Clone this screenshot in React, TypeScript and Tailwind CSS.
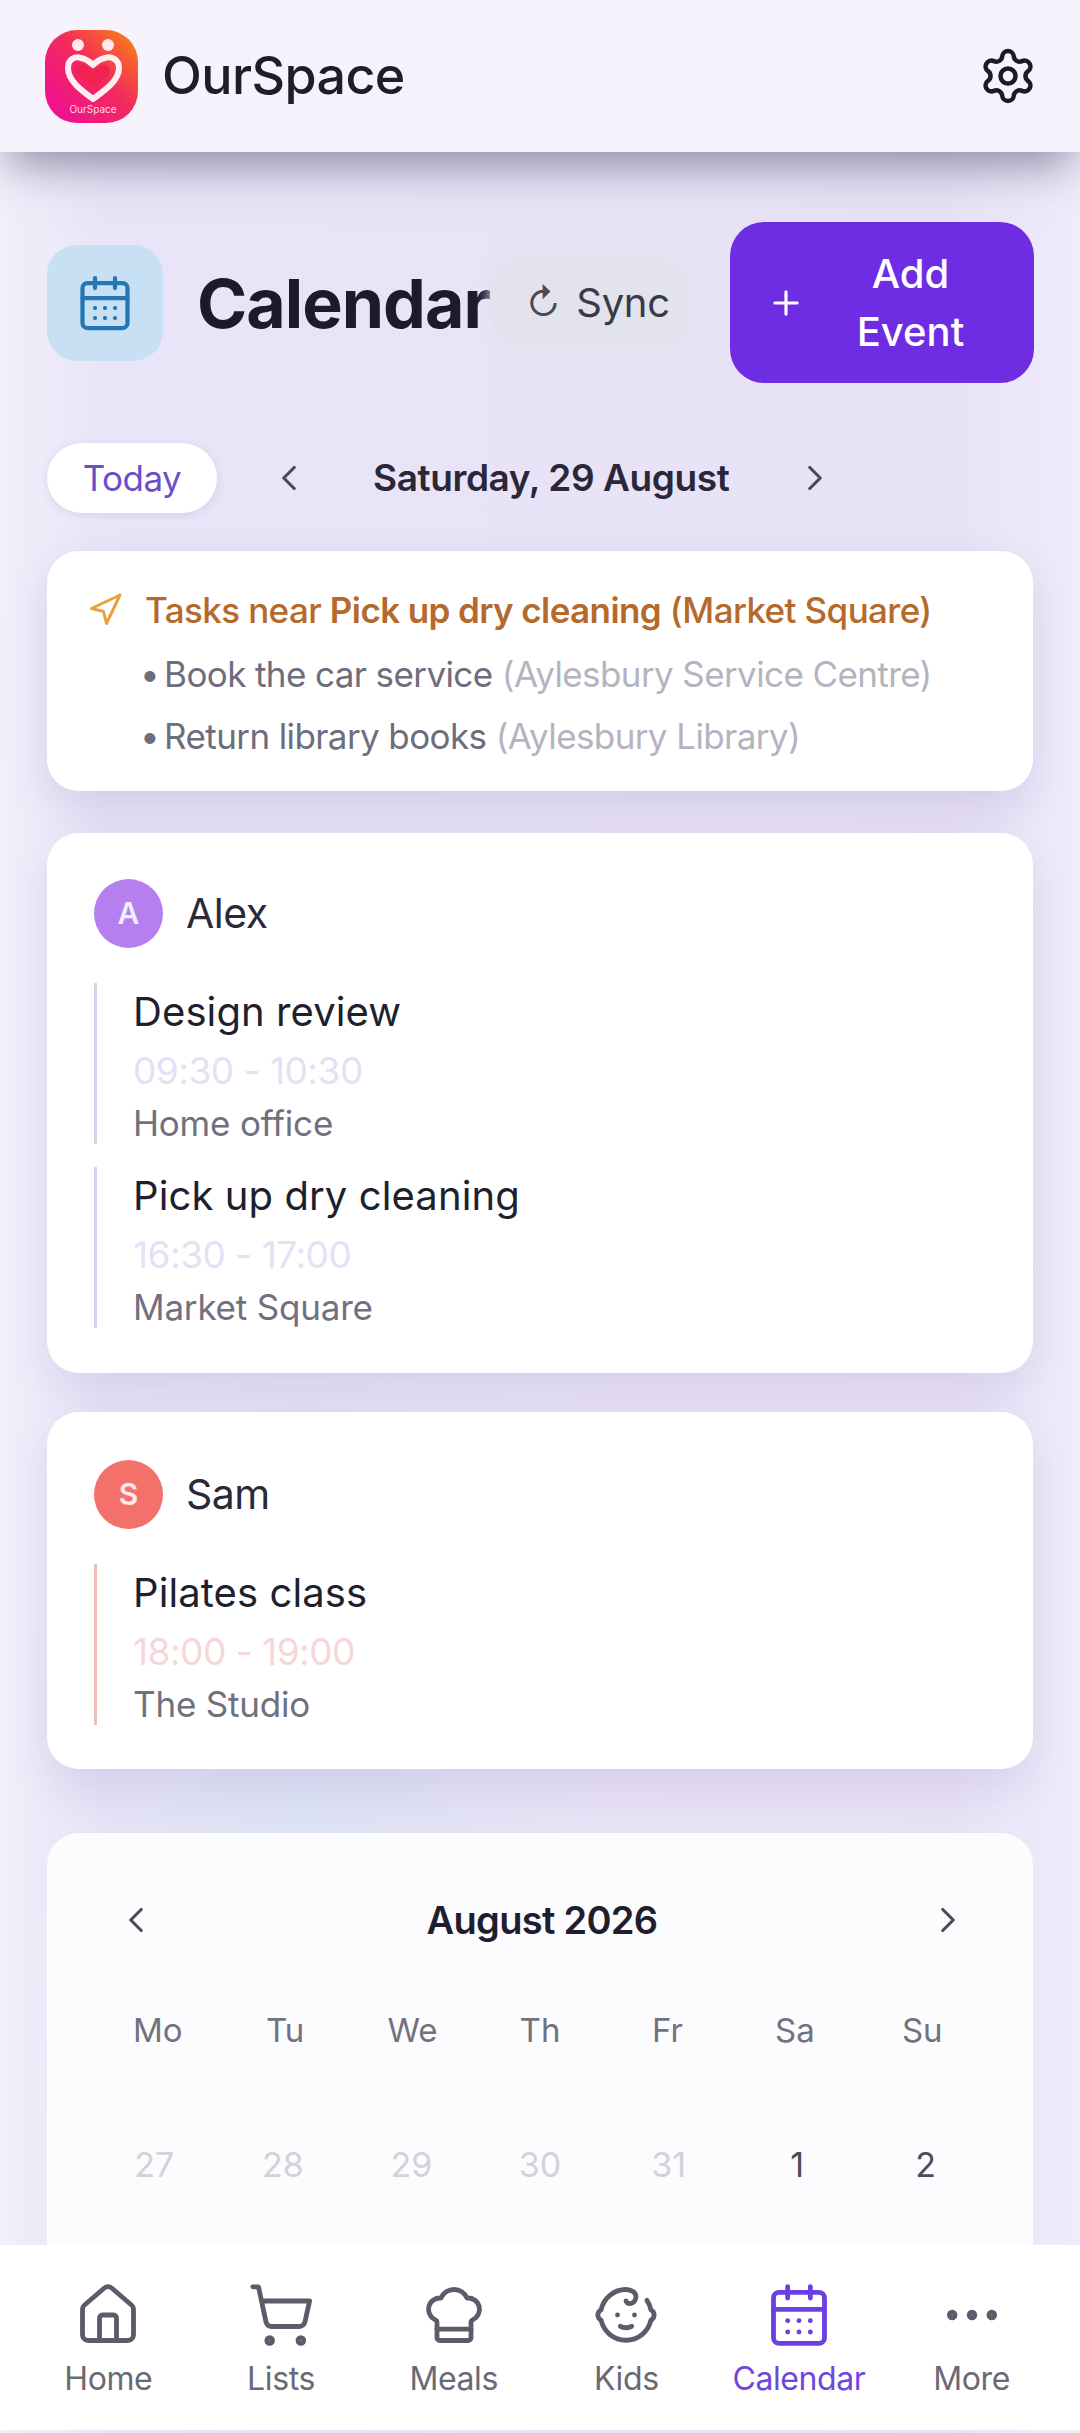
import {
  Baby,
  CalendarDays,
  ChefHat,
  ChevronLeft,
  ChevronRight,
  Ellipsis,
  House,
  Navigation,
  Plus,
  Settings,
  ShoppingCart,
} from "lucide-react";

const font = "font-['Inter','Noto_Sans',sans-serif]";

function Logo() {
  return (
    <svg viewBox="0 0 93 93" className="w-[93px] h-[93px] shrink-0">
      <defs>
        <linearGradient id="logo-grad" x1="0" y1="1" x2="1" y2="0">
          <stop offset="0" stopColor="#ee0a9c" />
          <stop offset="0.55" stopColor="#f32a5c" />
          <stop offset="1" stopColor="#fb8a0c" />
        </linearGradient>
      </defs>
      <rect width="93" height="93" rx="32" fill="url(#logo-grad)" />
      <circle cx="33" cy="15" r="6" fill="#ffe9ee" />
      <circle cx="63" cy="15" r="6" fill="#ffe9ee" />
      <path
        d="M48 69 C37 61 23 51 23 38 C23 29 30 26 36 28 C41 29 45 32 48 35 C51 32 55 29 60 28 C66 26 74 29 74 38 C74 51 59 61 48 69Z"
        fill="none"
        stroke="#ffeef2"
        strokeWidth="6"
        strokeLinejoin="round"
      />
      <path
        d="M48 58 C42 53 32 47 32 40 C32 35 38 34 41 36 L48 41 L55 36 C58 34 65 35 65 40 C65 47 54 53 48 58Z"
        fill="#ee2350"
      />
      <text x="48" y="83" textAnchor="middle" fontSize="10" fill="#ffd9e6" fontFamily="Inter, sans-serif">
        OurSpace
      </text>
    </svg>
  );
}

function EventRow({
  title,
  time,
  place,
  barColor,
  timeColor,
}: {
  title: string;
  time: string;
  place: string;
  barColor: string;
  timeColor: string;
}) {
  return (
    <div className={`border-l-[3px] ${barColor} pl-[36px] h-[161px] flex flex-col`}>
      <div className="text-[40px] leading-[56px] mt-[1px] text-[#201f2e] tracking-[0.1px]">{title}</div>
      <div className={`text-[37px] leading-[48px] mt-[7px] tracking-[-0.5px] ${timeColor}`}>{time}</div>
      <div className="text-[35px] leading-[44px] mt-[6px] text-[#70707e] tracking-[-0.2px]">{place}</div>
    </div>
  );
}

function PersonHeader({ initial, name, color }: { initial: string; name: string; color: string }) {
  return (
    <div className="flex items-center gap-[23px] mb-[35px]">
      <div className={`w-[69px] h-[69px] rounded-full ${color} flex items-center justify-center text-white/85 text-[30px] font-semibold`}>
        {initial}
      </div>
      <div className="text-[41px] text-[#2a2937] tracking-[-0.5px]">{name}</div>
    </div>
  );
}

const weekDays = ["Mo", "Tu", "We", "Th", "Fr", "Sa", "Su"];
const monthDays = [
  { day: 27, muted: true },
  { day: 28, muted: true },
  { day: 29, muted: true },
  { day: 30, muted: true },
  { day: 31, muted: true },
  { day: 1, muted: false },
  { day: 2, muted: false },
  { day: 3, muted: false },
  { day: 4, muted: false },
  { day: 5, muted: false },
  { day: 6, muted: false },
  { day: 7, muted: false },
  { day: 8, muted: false },
  { day: 9, muted: false },
];

const navItems = [
  { label: "Home", icon: House },
  { label: "Lists", icon: ShoppingCart },
  { label: "Meals", icon: ChefHat },
  { label: "Kids", icon: Baby },
  { label: "Calendar", icon: CalendarDays, active: true },
  { label: "More", icon: Ellipsis },
];

export default function App() {
  return (
    <div className={`${font} relative w-[1080px] h-[2433px] overflow-hidden flex flex-col bg-[radial-gradient(ellipse_at_28%_75%,#dde2f4_0%,transparent_26%),linear-gradient(90deg,#f1effb_0%,#e9e4f7_10%,#e8e2f6_88%,#efecfb_100%)]`}>
      {/* Top bar */}
      <header className="relative z-10 h-[152px] shrink-0 flex items-center justify-between pl-[45px] pr-[42px] bg-[#f6f3fd] shadow-[0_20px_42px_-8px_rgba(50,45,80,0.5)]">
        <div className="flex items-center gap-[24px]">
          <Logo />
          <span className="text-[52px] font-medium text-[#1f1d2b] tracking-[-0.6px]">OurSpace</span>
        </div>
        <Settings className="w-[60px] h-[60px] text-[#1c1a28]" strokeWidth={1.8} />
      </header>

      <main className="flex-1 min-h-0 overflow-hidden px-[47px] pt-[70px]">
        {/* Title row */}
        <div className="flex items-center h-[161px]">
          <div className="w-[116px] h-[116px] rounded-[30px] bg-[#c8e0f4] flex items-center justify-center shrink-0">
            <CalendarDays className="w-[60px] h-[60px] text-[#2377b4]" strokeWidth={1.7} />
          </div>
          <h1 className="ml-[34px] text-[68px] font-bold text-[#1d1a2e] tracking-[-1px] w-[293px] whitespace-nowrap">Calendar</h1>
          <button className="w-[200px] h-[90px] rounded-[32px] bg-[#e3e3ee] shadow-[0_0_14px_#e3e3ee] flex items-center justify-center gap-[16px] pl-[16px] text-[#3a3947] text-[40px] tracking-[-0.3px]">
            <span className="text-[36px] leading-none text-[#4a4957]">↻</span>
            Sync
          </button>
          <button className="ml-auto -mr-[1px] w-[304px] h-[161px] rounded-[34px] bg-[#6e2de2] flex items-center pl-[37px] text-white text-[40px] leading-[58px] font-medium">
            <Plus className="w-[38px] h-[38px] shrink-0" strokeWidth={2} />
            <span className="flex-1 text-center pr-[18px]">
              Add
              <br />
              Event
            </span>
          </button>
        </div>

        {/* Date row */}
        <div className="mt-[60px] flex items-center h-[70px]">
          <button className="w-[170px] h-[70px] rounded-full bg-white text-[#6b4fc9] text-[35px] tracking-[-0.5px] shadow-[0_2px_8px_rgba(90,70,160,0.12)]">Today</button>
          <ChevronLeft className="ml-[51px] w-[42px] h-[42px] text-[#4a4957]" strokeWidth={1.8} />
          <div className="ml-[63px] w-[360px] text-[37px] font-semibold text-[#2a2838] tracking-[-0.4px] whitespace-nowrap">Saturday, 29 August</div>
          <ChevronRight className="ml-[61px] w-[42px] h-[42px] text-[#4a4957]" strokeWidth={1.8} />
        </div>

        {/* Nearby tasks */}
        <section className="mt-[38px] h-[240px] rounded-[32px] bg-white pt-[34px] pl-[40px] shadow-[0_18px_44px_rgba(80,65,150,0.14)]">
          <div className="flex items-center gap-[22px] h-[50px]">
            <Navigation className="w-[36px] h-[36px] text-[#e9a23b]" strokeWidth={2} />
            <div className="text-[35px] font-medium text-[#b5692a] tracking-[-0.6px] whitespace-nowrap">
              Tasks near <span className="font-semibold">Pick up dry cleaning</span> (Market Square)
            </div>
          </div>
          <div className="pl-[53px] mt-[8px] text-[35px] leading-[62px] tracking-[-0.6px] whitespace-nowrap text-[#6d6d7c]">
            <div>
              <span className="mr-[5px]">•</span>Book the car service <span className="text-[#b4b4c0]">(Aylesbury Service Centre)</span>
            </div>
            <div>
              <span className="mr-[5px]">•</span>Return library books <span className="text-[#b4b4c0]">(Aylesbury Library)</span>
            </div>
          </div>
        </section>

        {/* Alex */}
        <section className="mt-[42px] h-[540px] rounded-[32px] bg-white pt-[46px] px-[47px] shadow-[0_18px_44px_rgba(80,65,150,0.12)]">
          <PersonHeader initial="A" name="Alex" color="bg-[#b57ff0]" />
          <div className="flex flex-col gap-[23px]">
            <EventRow title="Design review" time="09:30 - 10:30" place="Home office" barColor="border-[#d9cff0]" timeColor="text-[#e6dff5]" />
            <EventRow title="Pick up dry cleaning" time="16:30 - 17:00" place="Market Square" barColor="border-[#d9cff0]" timeColor="text-[#e6dff5]" />
          </div>
        </section>

        {/* Sam */}
        <section className="mt-[39px] h-[357px] rounded-[32px] bg-white pt-[48px] px-[47px] shadow-[0_18px_44px_rgba(80,65,150,0.12)]">
          <PersonHeader initial="S" name="Sam" color="bg-[#f4706a]" />
          <EventRow title="Pilates class" time="18:00 - 19:00" place="The Studio" barColor="border-[#f2bcb8]" timeColor="text-[#f6d6d8]" />
        </section>

        {/* Month grid */}
        <section className="mt-[64px] rounded-[32px] bg-[#fcfcfe] pt-[62px] px-[47px] pb-[40px]">
          <div className="flex items-center justify-between h-[50px] pl-[21px] pr-[17px]">
            <ChevronLeft className="w-[42px] h-[42px] text-[#4a4957]" strokeWidth={1.8} />
            <div className="text-[38px] font-semibold text-[#201e2e] tracking-[-0.7px]">August 2026</div>
            <ChevronRight className="w-[42px] h-[42px] text-[#4a4957]" strokeWidth={1.8} />
          </div>
          <div className="grid grid-cols-7 mt-[61px]">
            {weekDays.map((d) => (
              <div key={d} className="h-[50px] flex items-center justify-center text-[33px] text-[#72727f]">
                {d}
              </div>
            ))}
          </div>
          <div className="grid grid-cols-7 -mx-[4px] mt-[83px] gap-y-[83px]">
            {monthDays.map((d) => (
              <div key={d.day} className={`h-[50px] flex items-center justify-center text-[34px] ${d.muted ? "text-[#d2d2d9]" : "text-[#4c4b59]"}`}>
                {d.day}
              </div>
            ))}
          </div>
        </section>
      </main>

      {/* Bottom nav */}
      <nav className="absolute z-20 left-0 right-0 bottom-[3px] h-[185px] bg-white grid grid-cols-6 px-[22px] pt-[36px]">
        {navItems.map(({ label, icon: Icon, active }) => (
          <div key={label} className={`flex flex-col items-center ${active ? "text-[#6b3fe0]" : "text-[#5c5b69]"}`}>
            <Icon className="w-[68px] h-[68px]" strokeWidth={1.7} />
            <span className={`mt-[8px] text-[32px] leading-[44px] tracking-[-0.4px] ${active ? "text-[#6f47dc]" : "text-[#6a6a77]"}`}>{label}</span>
          </div>
        ))}
      </nav>
    </div>
  );
}
